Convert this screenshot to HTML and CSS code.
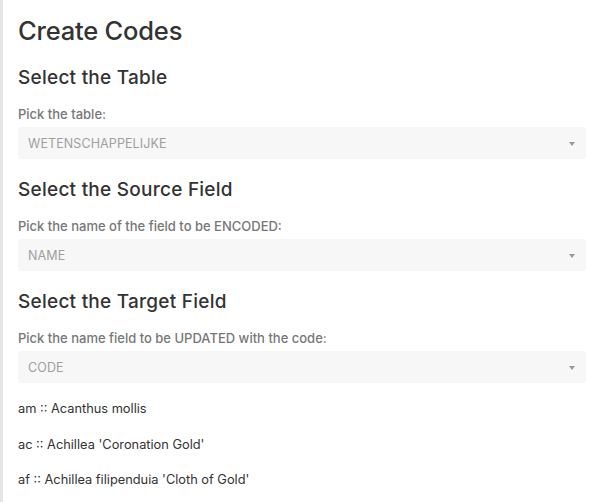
FILE: index.html
```html
<!DOCTYPE html>
<html>
<head>
<meta charset="utf-8">
<link rel="stylesheet" href="styles.css">
</head>
<body>
<div class="frame">
  <div class="rail"></div>
  <main class="content">
    <h1 class="title">Create Codes</h1>

    <section class="section">
      <h2 class="heading">Select the Table</h2>
      <div class="label">Pick the table:</div>
      <div class="select"><span class="value">WETENSCHAPPELIJKE</span><span class="caret"></span></div>
    </section>

    <section class="section">
      <h2 class="heading">Select the Source Field</h2>
      <div class="label">Pick the name of the field to be ENCODED:</div>
      <div class="select"><span class="value">NAME</span><span class="caret"></span></div>
    </section>

    <section class="section">
      <h2 class="heading">Select the Target Field</h2>
      <div class="label">Pick the name field to be UPDATED with the code:</div>
      <div class="select"><span class="value">CODE</span><span class="caret"></span></div>
    </section>

    <ul class="codes">
      <li>am :: Acanthus mollis</li>
      <li>ac :: Achillea 'Coronation Gold'</li>
      <li>af :: Achillea filipenduia 'Cloth of Gold'</li>
    </ul>
  </main>
</div>
</body>
</html>
```

FILE: styles.css
```css
html, body {
  margin: 0;
  padding: 0;
  background: #ffffff;
}

body {
  font-family: Inter, "Noto Sans", "Liberation Sans", sans-serif;
  color: #333333;
  width: 600px;
  height: 502px;
  overflow: hidden;
}

.frame {
  display: flex;
  height: 502px;
}

.rail {
  width: 3px;
  flex: 0 0 3px;
  background: #e6e6e6;
}

.content {
  flex: 1;
  padding: 0 14px 0 15px;
}

.title {
  margin: 15px 0 0;
  font-size: 25.5px;
  line-height: 32px;
  font-weight: 500;
  color: #333333;
  letter-spacing: -0.2px;
}

.section {
  margin-top: 19px;
  display: flex;
  flex-direction: column;
}

.heading {
  margin: 0 0 16px;
  font-size: 19px;
  line-height: 24px;
  font-weight: 500;
  color: #333333;
  letter-spacing: 0.25px;
}

.label {
  font-size: 13px;
  line-height: 16px;
  font-weight: 500;
  color: #777777;
  margin-bottom: 5px;
}

.select {
  height: 32px;
  background: #f7f7f7;
  border-radius: 3px;
  display: flex;
  align-items: center;
  justify-content: space-between;
  padding: 0 11px 0 10px;
}

.value {
  font-size: 12.5px;
  color: #a0a0a0;
  letter-spacing: 0.1px;
}

.caret {
  width: 0;
  height: 0;
  border-left: 3.5px solid transparent;
  border-right: 3.5px solid transparent;
  border-top: 4px solid #9a9a9a;
  margin-top: 1px;
}

.codes {
  list-style: none;
  margin: 18px 0 0;
  padding: 0;
  display: flex;
  flex-direction: column;
  gap: 19.5px;
}

.codes li {
  font-size: 12.8px;
  line-height: 16px;
  color: #333333;
}
```
